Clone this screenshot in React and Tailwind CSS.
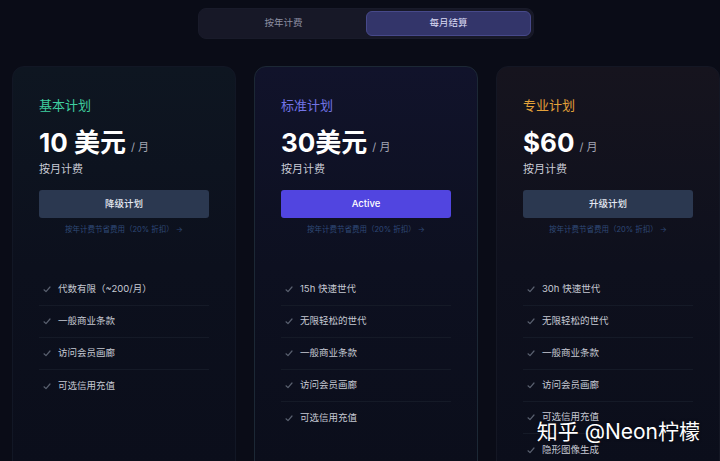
import React from "react";

const plans = [
  {
    name: "基本计划",
    nameColor: "text-[#3fcf9f]",
    price: "10 美元",
    button: "降级计划",
    buttonClass: "bg-[#2b3850] text-[#e6e9f2]",
    card: "bg-gradient-to-b from-[#0e1621] via-[#0c101d] to-[#0b0e1b] border-[#121725]",
    features: ["代数有限（~200/月）", "一般商业条款", "访问会员画廊", "可选信用充值"],
  },
  {
    name: "标准计划",
    nameColor: "text-[#7274e6]",
    price: "30美元",
    button: "Active",
    buttonClass: "bg-[#5145e0] text-white",
    card: "bg-gradient-to-b from-[#11132b] via-[#0d1020] to-[#0b0e1b] border-[#1c2835]",
    features: ["15h 快速世代", "无限轻松的世代", "一般商业条款", "访问会员画廊", "可选信用充值"],
  },
  {
    name: "专业计划",
    nameColor: "text-[#e3a13a]",
    price: "$60",
    button: "升级计划",
    buttonClass: "bg-[#2b3850] text-[#e6e9f2]",
    card: "bg-gradient-to-b from-[#16141e] via-[#0e101d] to-[#0b0e1b] border-[#141724]",
    features: ["30h 快速世代", "无限轻松的世代", "一般商业条款", "访问会员画廊", "可选信用充值", "隐形图像生成"],
  },
];

const Check = () => (
  <svg width="8" height="7" viewBox="0 0 8 7" fill="none" className="shrink-0">
    <path d="M1 3.8 L3 5.6 L7 1" stroke="#5a6170" strokeWidth="1.2" strokeLinecap="round" strokeLinejoin="round" />
  </svg>
);

const PlanCard = ({ plan }) => (
  <div className={`w-[224px] shrink-0 rounded-t-xl border px-[26px] pt-[30px] ${plan.card}`}>
    <h2 className={`text-[13px] leading-4 ${plan.nameColor}`}>{plan.name}</h2>
    <div className="mt-[14px] flex items-end gap-[5px]">
      <span className="text-[26px] font-bold leading-8 text-white">{plan.price}</span>
      <span className="mb-[4px] text-[11px] text-[#a3a6b4]">/ 月</span>
    </div>
    <p className="mt-[3px] text-[11px] leading-[14px] text-[#c9ccd6]">按月计费</p>
    <button className={`mt-[14px] h-[28px] w-[170px] rounded-[3px] text-[9.5px] font-medium ${plan.buttonClass}`}>
      {plan.button}
    </button>
    <p className="mt-[6px] text-center text-[7.5px] leading-3 text-[#2f4977]">
      按年计费节省费用（20% 折扣） →
    </p>
    <ul className="mt-[38px] flex flex-col divide-y divide-[#151a27]">
      {plan.features.map((f) => (
        <li key={f} className="flex h-[32px] items-center gap-[7px] pl-[4px]">
          <Check />
          <span className="text-[9.5px] text-[#c6c9d3]">{f}</span>
        </li>
      ))}
    </ul>
  </div>
);

export default function App() {
  return (
    <div
      className="relative h-[461px] w-[720px] overflow-hidden bg-[#0a0c17]"
      style={{ fontFamily: 'Inter, "Noto Sans CJK SC", sans-serif' }}
    >
      <div className="flex justify-center pt-[8px] pl-[12px]">
        <div className="flex h-[31px] w-[336px] items-center rounded-lg border border-[#191b2a] bg-[#171827] p-[2px]">
          <div className="flex flex-1 items-center justify-center text-[9.5px] text-[#8d8fa2]">按年计费</div>
          <div className="flex h-full w-[165px] items-center justify-center rounded-md border border-[#47498a] bg-[#33356a] text-[9.5px] text-[#dcdcf4]">
            每月结算
          </div>
        </div>
      </div>
      <div className="mt-[27px] flex gap-[18px] pl-[12px]">
        {plans.map((p) => (
          <PlanCard key={p.name} plan={p} />
        ))}
      </div>
      <div className="absolute right-[20px] bottom-[17px] text-[21px] leading-6 text-white [text-shadow:0_0_3px_rgba(0,0,0,0.6)]">
        知乎 @Neon柠檬
      </div>
    </div>
  );
}
